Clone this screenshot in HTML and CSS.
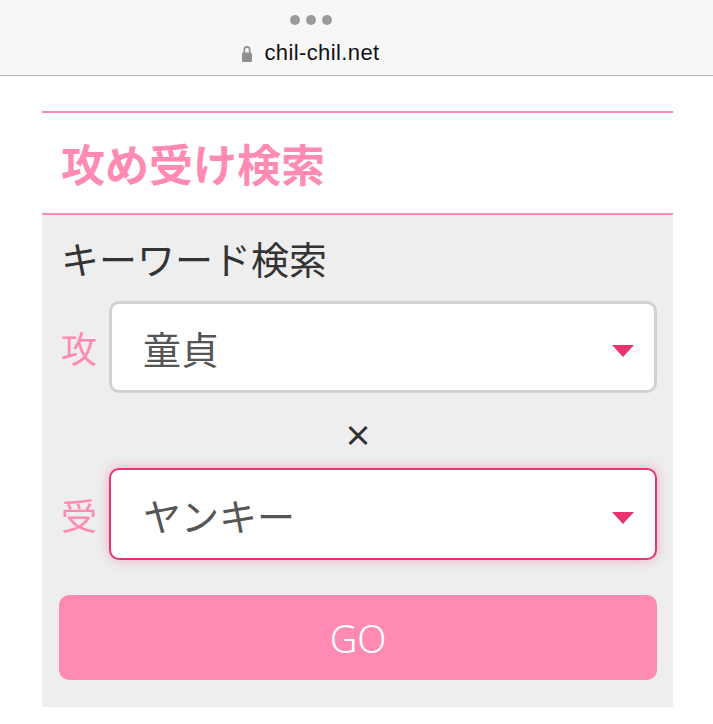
FILE: index.html
```html
<!DOCTYPE html>
<html lang="ja">
<head>
  <meta charset="UTF-8" />
  <meta name="viewport" content="width=device-width, initial-scale=1.0">
  <title>攻め受け検索</title>
  <link rel="stylesheet" href="styles.css">
</head>
<body>
  <div class="topbar">
    <div class="dots"><span></span><span></span><span></span></div>
    <div class="url">
      <svg class="lock" width="10" height="17" viewBox="0 0 10 17">
        <path d="M2.3 8V4.6a2.7 2.7 0 0 1 5.4 0V8" fill="none" stroke="#8e8e93" stroke-width="1.7"/>
        <rect x="0" y="7.5" width="10" height="9.5" rx="1.6" fill="#8e8e93"/>
      </svg>
      <span>chil-chil.net</span>
    </div>
  </div>

  <div class="search">
    <h2 class="search-title">攻め受け検索</h2>
    <div class="search-body">
      <div class="keyword">キーワード検索</div>

      <div class="pick-row">
        <span class="pick-label">攻</span>
        <div class="pick">
          <select id="seme">
            <option>童貞</option>
          </select>
        </div>
      </div>

      <div class="times">×</div>

      <div class="pick-row">
        <span class="pick-label">受</span>
        <div class="pick focus">
          <select id="uke">
            <option>ヤンキー</option>
          </select>
        </div>
      </div>

      <button class="go-btn">GO</button>
    </div>
  </div>
</body>
</html>
```

FILE: styles.css
```css
body {
  margin: 0;
  padding: 0;
  background: #fff;
  font-family: "Noto Sans CJK JP", "Noto Sans", sans-serif;
}

.topbar {
  height: 76px;
  background: #f7f7f7;
  border-bottom: 1px solid #b4b4b4;
  box-sizing: border-box;
  padding-right: 91px;
  display: flex;
  flex-direction: column;
  align-items: center;
}

.dots {
  display: flex;
  gap: 6px;
  margin-top: 15px;
}

.dots span {
  width: 10px;
  height: 10px;
  border-radius: 50%;
  background: #9a9a9a;
}

.url {
  display: flex;
  align-items: center;
  gap: 12px;
  margin-top: 15px;
  font-family: "Liberation Sans", Arial, sans-serif;
  font-size: 22px;
  color: #111;
  letter-spacing: 0.4px;
}

.lock {
  margin-top: 1px;
}

.search {
  margin: 35px 40px 0 42px;
}

.search-title {
  margin: 0;
  height: 100px;
  border-top: 2px solid #ff8ab4;
  border-bottom: 2px solid #ff8ab4;
  display: flex;
  align-items: center;
  padding-left: 19px;
  font-size: 44px;
  font-weight: bold;
  color: #ff8ab4;
}

.search-body {
  background: #eee;
  padding: 17px 16px 27px 17px;
}

.keyword {
  font-size: 38px;
  line-height: 52px;
  color: #333;
  padding-left: 2px;
  margin-bottom: 17px;
}

.pick-row {
  display: flex;
  align-items: center;
}

.pick-label {
  width: 50px;
  font-size: 36px;
  color: #ff8ab4;
  padding-left: 2px;
  box-sizing: border-box;
}

.pick {
  flex: 1;
  position: relative;
}

.pick::after {
  content: "";
  position: absolute;
  right: 23px;
  top: 44px;
  border-left: 11px solid transparent;
  border-right: 11px solid transparent;
  border-top: 12px solid #e8336e;
}

.pick select {
  appearance: none;
  -webkit-appearance: none;
  width: 100%;
  height: 92px;
  box-sizing: border-box;
  border: 3px solid #d2d2d2;
  border-radius: 10px;
  background: #fff;
  padding-left: 31px;
  font-family: "Noto Sans CJK JP", "Noto Sans", sans-serif;
  font-size: 38px;
  color: #555;
  outline: none;
}

.pick.focus select {
  border: 2px solid #e8336e;
  padding-left: 32px;
  box-shadow: 0 0 12px rgba(232, 51, 110, 0.35);
}

.times {
  height: 75px;
  display: flex;
  align-items: center;
  justify-content: center;
  padding-top: 7px;
  box-sizing: border-box;
  font-size: 29px;
  font-weight: bold;
  color: #333;
}

.go-btn {
  display: block;
  width: 100%;
  height: 85px;
  margin-top: 35px;
  border: none;
  border-radius: 10px;
  background: #ff8ab4;
  color: #fff;
  font-family: "Noto Sans", sans-serif;
  font-size: 38px;
  font-weight: 300;
  cursor: pointer;
}
```
